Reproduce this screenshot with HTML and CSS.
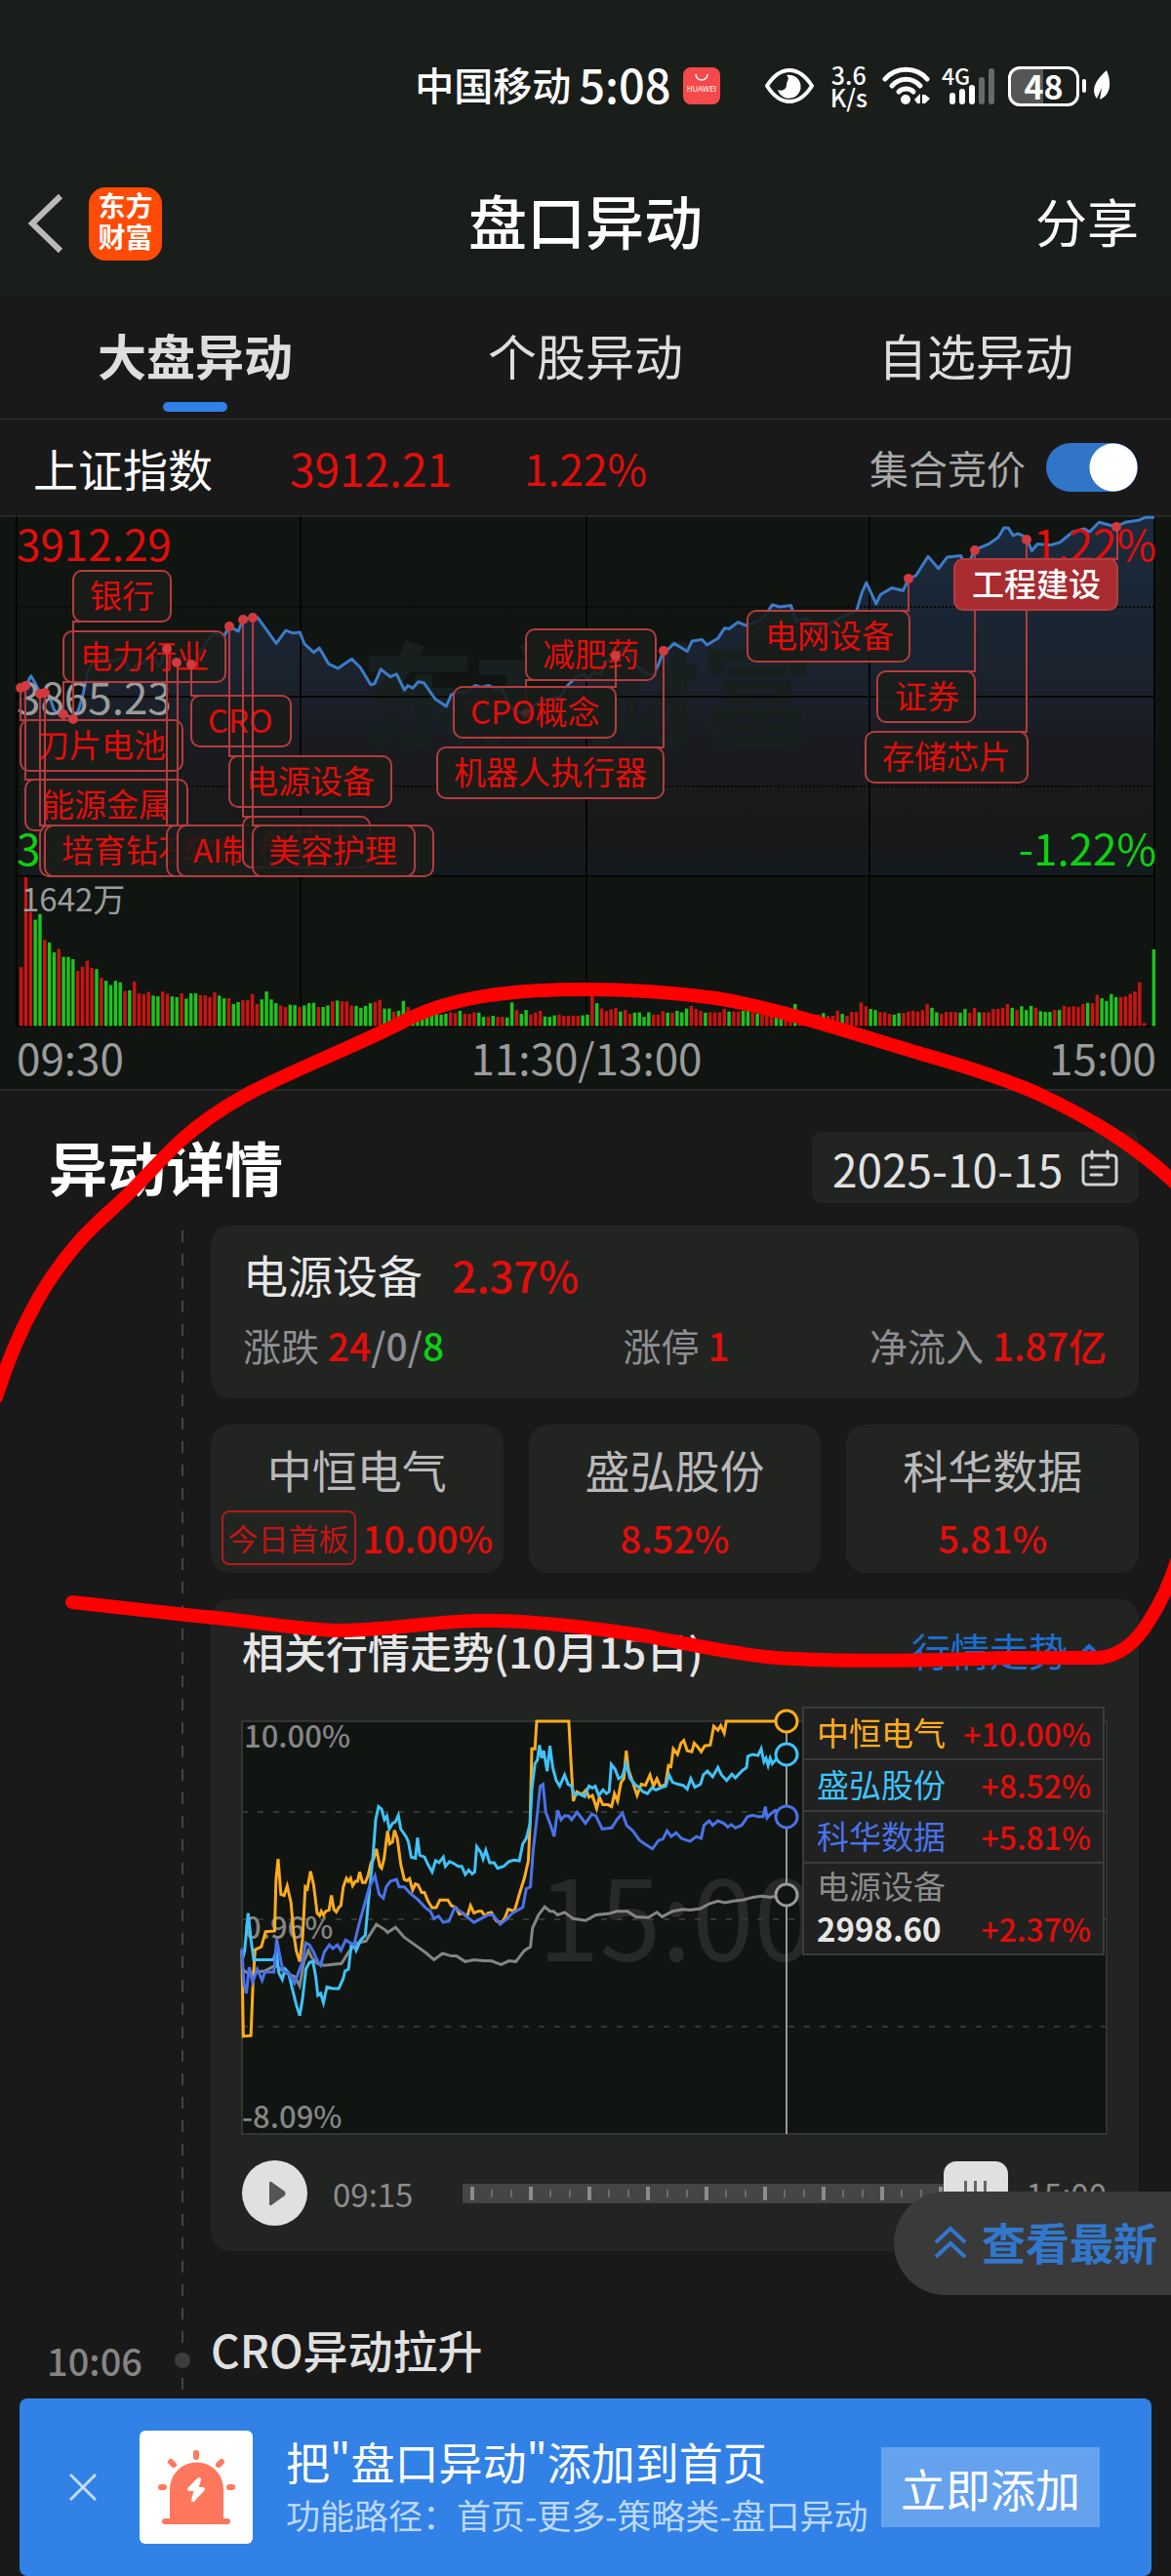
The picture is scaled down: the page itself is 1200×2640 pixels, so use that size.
FILE: index.html
```html
<!DOCTYPE html>
<html lang="zh-CN">
<head>
<meta charset="utf-8">
<meta name="viewport" content="width=device-width">
<title>盘口异动</title>
<link rel="stylesheet" href="styles.css">
</head>
<body>
<div class="page">
<header class="top">
  <div class="status">
    <span class="carrier">中国移动</span>
    <span class="clock">5:08</span>
    <svg class="store" viewBox="0 0 38 38" width="38" height="38"><rect width="38" height="38" rx="8" fill="#f5494c"/><path d="M13 7a6 6 0 0 0 12 0" fill="none" stroke="#fff" stroke-width="1.5"/><text x="19" y="25" font-size="8" text-anchor="middle" fill="#fff">HUAWEI</text></svg>
    <svg class="eye" viewBox="0 0 50 36" width="50" height="36"><path d="M2 18C9 7 17 2 25 2s16 5 23 16c-7 11-15 16-23 16S9 29 2 18z" fill="none" stroke="#fff" stroke-width="4"/><path d="M22 7a12 12 0 1 1-9 15c5 2 9-1 9-5s4-6 0-10z" fill="#fff"/></svg>
    <span class="speed">3.6<br>K/s</span>
    <svg class="wifi" viewBox="0 0 49 40" width="49" height="40"><g fill="none" stroke="#fff" stroke-width="5" stroke-linecap="round"><path d="M3 13C14 0 35 0 46 13"/><path d="M10 20C18 11 31 11 39 20"/><path d="M17 26C21 22 28 22 32 26"/></g><circle cx="24" cy="34" r="5" fill="#fff"/><path d="M33 34l6-6v10h-3zM41 29h3l5 4-5 5h-3z" fill="#fff"/></svg>
    <svg class="signal" viewBox="0 0 56 42" width="56" height="42"><text x="0" y="20" font-size="23" font-weight="500" fill="#fff">4G</text><g stroke-width="6" stroke-linecap="round" stroke="#fff"><path d="M11 31v6M21 27v10M31 23v14"/><path d="M41 15v22M51 6v31" stroke="#686a68"/></g></svg>
    <span class="battery">48</span>
    <svg class="leaf" viewBox="0 0 30 36" width="30" height="36"><path d="M2 13v10" stroke="#fff" stroke-width="4" stroke-linecap="round"/><path d="M25 2c5 12 5 25-7 30l2-12-5 11c-7-10 0-20 10-29z" fill="#fff"/></svg>
  </div>
  <nav class="titlebar">
    <button class="back" aria-label="返回"><svg viewBox="0 0 38 62" width="38" height="62"><path d="M34 3L5 31l29 28" fill="none" stroke="#b9bab9" stroke-width="6"/></svg></button>
    <span class="logo">东方<br>财富</span>
    <h1>盘口异动</h1>
    <button class="share">分享</button>
  </nav>
</header>

<nav class="tabs">
  <a href="#market" class="active">大盘异动</a>
  <a href="#stock">个股异动</a>
  <a href="#watch">自选异动</a>
</nav>

<section class="index-row">
  <span class="index-name">上证指数</span>
  <span class="index-price">3912.21</span>
  <span class="index-change">1.22%</span>
  <label for="auction">集合竞价</label>
  <input type="checkbox" id="auction" class="switch" checked>
</section>

<svg class="market" id="market" viewBox="0 528 1200 590">
  <defs><linearGradient id="fade" x1="0" y1="0" x2="0" y2="1"><stop offset="0" stop-color="#1b2b3e"/><stop offset=".5" stop-color="#1a212b"/><stop offset=".62" stop-color="#1a1b21"/><stop offset=".88" stop-color="#191819"/><stop offset="1" stop-color="#131b1e"/></linearGradient></defs>
  <rect x="0" y="528" width="1200" height="589" fill="#101511"/>
  <path class="edge" d="M0 529H1200M0 1117H1200"/>
  <g transform="translate(0 510) scale(.3827 .389)">
    <path id="index-area" fill="url(#fade)"/>
  </g>
  <text class="brand" x="602" y="757">东方财富</text>
  <path class="grid" d="M17 529V1052M308 529V1052M601 529V1052M891 529V1052M1183 529V1052M17 714H1183M17 898H1183M17 1052H1183"/>
  <path class="grid dots" d="M17 622H1183M17 806H1183"/>
  <g transform="translate(0 510) scale(.3827 .389)">
    <path id="index-line" class="index-line" d="M55 500L68 497 83 470 95 490 108 517 120 513 133 525 145 560 158 570 170 571 183 575 196 584 210 560 222 520 235 460 247 435 260 420 275 425 290 430 310 430 325 420 335 430 350 460 365 440 385 435 400 415 412 420 425 445 437 420 448 398 460 430 474 435 490 415 500 430 512 440 525 430 540 400 560 370 575 357 600 365 613 340 625 345 638 352 651 320 676 316 690 316 715 350 740 384 765 350 785 357 803 355 815 385 840 408 855 396 880 438 905 450 942 425 965 448 993 493 1003 490 1020 452 1045 472 1062 465 1083 507 1092 495 1105 502 1120 485 1135 488 1165 530 1195 550 1208 520 1225 512 1250 512 1272 495 1290 500 1308 495 1330 505 1345 505 1365 550 1385 565 1409 567 1440 540 1470 530 1500 525 1520 495 1545 470 1565 465 1573 480 1588 460 1608 465 1628 430 1649 416 1668 400 1683 405 1703 440 1723 460 1748 470 1763 440 1776 404 1788 400 1805 384 1840 405 1853 378 1880 374 1893 388 1923 370 1940 344 1953 345 1976 328 2001 338 2018 330 2038 320 2053 305 2068 282 2088 288 2118 284 2133 325 2158 318 2178 335 2208 340 2233 325 2258 312 2293 300 2308 250 2320 224 2346 280 2358 255 2388 238 2418 245 2433 214 2453 205 2485 155 2513 187 2536 157 2573 153 2588 185 2610 138 2648 122 2673 105 2688 80 2700 80 2713 100 2726 95 2738 100 2750 110 2763 140 2778 122 2813 125 2838 118 2873 90 2903 82 2918 90 2943 65 2989 77 3013 65 3048 60 3068 52 3091 52"/>
    <g id="volume"></g>
  </g>
  <g class="axis">
    <text x="17" y="575" class="up">3912.29</text>
    <text x="17" y="732">3865.23</text>
    <text x="17" y="887" class="down">3818.17</text>
    <text x="1185" y="575" class="up end">1.22%</text>
    <text x="1185" y="887" class="down end">-1.22%</text>
    <text x="17" y="1102">09:30</text>
    <text x="601" y="1102" class="mid">11:30/13:00</text>
    <text x="1185" y="1102" class="end">15:00</text>
    <text x="22" y="934" class="small">1642万</text>
  </g>
  <g class="tags">
    <path d="M21 705V738h10"/><rect x="21" y="738" width="166" height="52" rx="9"/><text x="38" y="776">刀片电池</text>
    <path d="M26 703V799h10"/><rect x="26" y="799" width="166" height="52" rx="9"/><text x="43" y="837">能源金属</text>
    <path d="M41 711V846h10"/><rect x="41" y="846" width="166" height="52" rx="9"/>
    <path d="M46 710V846h10"/><rect x="46" y="846" width="166" height="52" rx="9"/><text x="63" y="884">培育钻石</text>
    <path d="M65 732V699h10"/><rect x="65" y="647" width="166" height="52" rx="9"/><text x="82" y="685">电力行业</text>
    <path d="M75 737V637h10"/><rect x="75" y="585" width="100" height="52" rx="9"/><text x="92" y="623">银行</text>
    <path d="M171 665V846h10"/><rect x="171" y="846" width="166" height="52" rx="9"/><text x="188" y="884">软件开发</text>
    <path d="M182 679V846h10"/><rect x="182" y="846" width="262" height="52" rx="9"/><text x="198" y="884">AI制药(医疗)</text>
    <path d="M196 681V713h10"/><rect x="196" y="713" width="102" height="52" rx="9"/><text x="213" y="751">CRO</text>
    <path d="M235 642V775h10"/><rect x="235" y="775" width="166" height="52" rx="9"/><text x="252" y="813">电源设备</text>
    <path d="M249 635V837h10"/><rect x="249" y="837" width="130" height="52" rx="9"/><text x="266" y="875">AI芯片</text>
    <path d="M259 633V846h10"/><rect x="259" y="846" width="166" height="52" rx="9"/><text x="275" y="884">美容护理</text>
    <path d="M539 731V697h10"/><rect x="539" y="645" width="133" height="52" rx="9"/><text x="556" y="683">减肥药</text>
    <path d="M631 672V704h-10"/><rect x="465" y="704" width="166" height="52" rx="9"/><text x="482" y="742">CPO概念</text>
    <path d="M680 667V766h-10"/><rect x="448" y="766" width="232" height="52" rx="9"/><text x="465" y="804">机器人执行器</text>
    <path d="M931 593V626h-10"/><rect x="766" y="626" width="166" height="52" rx="9"/><text x="784" y="664">电网设备</text>
    <path d="M999 564V688h-10"/><rect x="899" y="688" width="100" height="52" rx="9"/><text x="917" y="726">证券</text>
    <path d="M1052 553V750h-10"/><rect x="887" y="750" width="166" height="52" rx="9"/><text x="904" y="788">存储芯片</text>
    <path d="M1145 540V573h-10"/><rect x="978" y="573" width="167" height="52" rx="9" class="hot"/><text x="996" y="611" class="hot">工程建设</text>
  </g>
  <g fill="#d23a3d"><circle cx="21" cy="705" r="5"/><circle cx="26" cy="703" r="5"/><circle cx="41" cy="711" r="5"/><circle cx="46" cy="710" r="5"/><circle cx="65" cy="732" r="5"/><circle cx="75" cy="737" r="5"/><circle cx="171" cy="665" r="5"/><circle cx="181" cy="679" r="5"/><circle cx="196" cy="681" r="5"/><circle cx="235" cy="642" r="5"/><circle cx="249" cy="635" r="5"/><circle cx="259" cy="633" r="5"/><circle cx="539" cy="731" r="5" opacity=".2"/><circle cx="631" cy="672" r="5"/><circle cx="680" cy="667" r="5"/><circle cx="931" cy="593" r="5"/><circle cx="999" cy="564" r="5"/><circle cx="1052" cy="553" r="5"/><circle cx="1144" cy="540" r="5"/></g>
</svg>

<section class="details">
  <div class="details-head">
    <h2>异动详情</h2>
    <button class="date">2025-10-15
      <svg viewBox="0 0 38 38" width="38" height="38"><g fill="none" stroke="#d0d0d0" stroke-width="3" stroke-linecap="round"><rect x="2" y="6" width="34" height="30" rx="4"/><path d="M11 2v7M27 2v7M10 18h18M10 26h11"/></g></svg>
    </button>
  </div>

  <ul class="timeline">
    <li class="event">
      <div class="body">
        <article class="card sector">
          <h3>电源设备 <b class="up">2.37%</b></h3>
          <div class="stats">
            <p>涨跌 <b><i class="up">24</i>/0/<i class="down">8</i></b></p>
            <p>涨停 <b class="up">1</b></p>
            <p>净流入 <b class="up">1.87亿</b></p>
          </div>
        </article>
        <div class="stocks">
          <a href="#s1" class="card"><span>中恒电气</span><b><em>今日首板</em>10.00%</b></a>
          <a href="#s2" class="card"><span>盛弘股份</span><b>8.52%</b></a>
          <a href="#s3" class="card"><span>科华数据</span><b>5.81%</b></a>
        </div>
        <article class="card trend">
          <div class="trend-head">
            <h3>相关行情走势(10月15日)</h3>
            <button>行情走势 <svg viewBox="0 0 22 14" width="22" height="14"><path d="M3 11l8-8 8 8" fill="none" stroke="#1b6fd0" stroke-width="4"/></svg></button>
          </div>
          <div class="plot">
            <svg viewBox="248 1764 886 423">
              <rect x="248" y="1764" width="886" height="423" fill="#101511" stroke="#313431" stroke-width="2"/>
              <text x="551" y="2010" class="ghost">15:00</text>
              <path d="M248 1857H1134M248 1967H1134M248 2077H1134" stroke="#343734" stroke-width="2" stroke-dasharray="6 10"/>
              <g class="scale"><text x="250" y="1791">10.00%</text><text x="250" y="1987">0.96%</text><text x="248" y="2181">-8.09%</text></g>
              <g class="series" transform="translate(200 1620) scale(.35714 .3827)">
                <path stroke="#858585" d="M134 1040L150 1050 200 1045 230 1030 260 1050 285 1060 300 1085 312 1020 325 990 335 1010 350 1025 370 1030 420 1025 440 995 465 970 490 965 520 920 545 935 552 942 575 928 600 955 630 975 660 995 685 1015 710 998 735 1005 750 1005 775 1020 800 1015 830 1018 850 1018 878 1028 900 1018 920 1020 945 990 962 980 968 930 985 895 1003 873 1018 885 1028 885 1040 895 1060 888 1085 905 1120 910 1150 895 1185 892 1210 885 1240 885 1265 900 1300 902 1325 888 1340 900 1370 885 1400 880 1420 882 1450 878 1475 865 1500 858 1520 862 1545 858 1570 855 1600 848 1625 845 1650 847 1697 842"/>
                <path stroke="#ffac1c" d="M134 990L138 1220 160 1218 166 1075 172 988 190 980 202 940 228 938 232 800 238 745 246 840 255 843 264 817 275 862 282 940 290 990 300 1020 308 960 316 820 322 825 331 778 340 815 350 890 357 897 362 885 368 895 375 885 384 882 391 843 398 880 405 887 412 875 418 870 425 820 434 797 440 805 446 797 452 817 460 805 466 805 472 780 480 808 488 808 496 790 505 755 512 745 520 718 530 765 535 770 542 745 552 670 558 705 566 700 572 668 580 690 590 760 600 800 608 803 615 798 624 828 632 812 640 815 650 835 658 835 668 858 680 876 692 875 702 855 725 855 735 870 748 875 758 893 768 890 780 900 790 870 800 890 812 885 822 885 832 898 840 890 850 888 865 912 880 915 890 900 898 880 906 882 916 885 930 840 945 795 956 750 961 650 966 450 975 450 980 376 1072 376 1078 480 1085 590 1095 565 1110 572 1122 560 1130 580 1140 575 1152 610 1160 580 1170 600 1185 600 1195 605 1203 570 1212 590 1222 540 1230 530 1237 455 1243 505 1252 530 1268 575 1280 545 1292 548 1305 520 1315 550 1325 530 1335 552 1350 545 1358 495 1365 498 1372 450 1384 465 1394 435 1402 428 1412 455 1425 458 1432 435 1442 445 1452 458 1462 442 1478 440 1488 390 1500 400 1508 388 1518 408 1524 376 1697 376"/>
                <path stroke="#3fc3fa" d="M134 1020L142 990 152 890 160 960 168 1015 225 1015 233 990 240 1050 250 1068 258 1040 268 1050 278 1090 290 1135 300 1165 308 1120 318 1040 328 1022 338 1020 346 1060 352 1110 360 1105 368 1130 378 1088 395 1092 412 1092 425 1065 430 1045 440 1040 448 975 458 980 462 990 475 962 488 950 498 850 510 740 518 640 526 605 535 612 543 640 550 630 557 665 566 650 575 645 583 628 590 665 605 685 612 700 620 740 632 743 638 688 644 735 658 740 668 760 680 780 690 750 700 755 712 740 718 765 730 752 742 757 755 765 765 765 775 787 785 775 795 785 802 780 808 712 820 728 826 745 834 722 845 755 858 755 868 770 885 765 900 752 915 748 930 750 940 705 950 690 961 650 966 560 975 490 982 480 988 440 994 475 1000 455 1010 510 1018 442 1026 500 1036 535 1046 550 1060 520 1070 545 1080 550 1088 575 1100 570 1118 578 1130 550 1140 555 1148 550 1158 575 1170 560 1180 570 1188 565 1194 492 1205 505 1215 530 1225 525 1237 490 1248 530 1262 545 1275 555 1285 565 1298 570 1310 555 1322 560 1335 555 1350 550 1360 520 1370 540 1385 545 1400 548 1412 558 1422 530 1434 553 1450 545 1458 520 1470 510 1485 525 1500 500 1510 520 1525 535 1540 518 1550 528 1568 510 1582 500 1586 470 1600 465 1615 468 1624 450 1632 485 1638 475 1644 495 1650 475 1656 490 1665 480 1675 475 1697 466"/>
                <path stroke="#4a72ea" d="M134 985L140 1080 147 1105 155 1035 165 1075 178 1040 192 1070 200 1048 226 1048 234 960 242 1000 252 1045 268 1050 285 1078 300 1040 308 1020 317 970 328 975 340 995 352 1020 360 1030 370 995 385 975 395 985 408 975 418 990 432 962 445 970 456 975 470 920 485 870 500 820 516 790 528 840 540 850 548 820 560 805 578 800 585 820 600 820 615 835 640 855 660 875 675 885 685 905 698 898 712 915 728 912 745 875 760 885 780 900 800 915 820 905 840 895 855 895 875 920 895 905 910 890 940 875 950 825 962 820 970 720 980 640 990 550 998 545 1006 620 1020 655 1030 685 1040 615 1050 640 1060 630 1072 630 1080 640 1096 620 1108 635 1120 650 1138 625 1150 630 1168 665 1195 662 1210 640 1226 622 1238 655 1256 670 1275 695 1290 705 1312 718 1330 695 1342 692 1354 670 1366 685 1380 675 1395 690 1420 698 1438 685 1452 690 1460 655 1475 643 1485 655 1500 643 1518 650 1528 660 1538 653 1550 662 1568 655 1585 632 1600 628 1615 632 1630 632 1636 605 1641 635 1650 625 1665 615 1697 632"/>
              </g>
              <path d="M806 1764V2187" stroke="#9a9a9a" stroke-width="2"/>
              <g fill="#101511" stroke-width="3"><circle cx="806" cy="1764" r="11" stroke="#ffac1c"/><circle cx="806" cy="1798" r="11" stroke="#3fc3fa"/><circle cx="806" cy="1862" r="11" stroke="#4a72ea"/><circle cx="806" cy="1942" r="11" stroke="#9a9a9a"/></g>
            </svg>
            <table class="legend">
              <tr class="c1"><th scope="row">中恒电气</th><td>+10.00%</td></tr>
              <tr class="c2"><th scope="row">盛弘股份</th><td>+8.52%</td></tr>
              <tr class="c3"><th scope="row">科华数据</th><td>+5.81%</td></tr>
              <tr class="c4"><th scope="row">电源设备<br><b>2998.60</b></th><td>+2.37%</td></tr>
            </table>
          </div>
          <div class="player">
            <button class="play" aria-label="播放"><svg viewBox="0 0 18 26" width="18" height="26"><path d="M1 2q0-2 2-1l14 10q1 2 0 4L3 25q-2 1-2-1z" fill="#555"/></svg></button>
            <label for="seek">09:15</label>
            <input type="range" id="seek" min="0" max="100" value="100">
            <span>15:00</span>
          </div>
        </article>
      </div>
    </li>
    <li class="event next">
      <time>10:06</time>
      <h3>CRO异动拉升</h3>
    </li>
  </ul>
</section>

<svg class="scribble" viewBox="0 0 1200 2640"><path d="M-4 1432C6 1400 20 1365 38 1333 49 1313 62 1295 77 1277 96 1254 118 1238 138 1217 153 1202 167 1186 184 1170 206 1150 230 1134 256 1120 310 1092 370 1070 421 1043 470 1020 530 1014 600 1014 650 1014 690 1017 734 1023 800 1034 870 1058 944 1080 990 1093 1030 1106 1062 1120 1120 1147 1165 1175 1206 1214M1206 1600C1199 1622 1190 1642 1177 1662 1165 1682 1150 1696 1127 1699H1033C950 1702 850 1704 785 1698 740 1693 700 1684 664 1677 600 1667 540 1660 486 1661 430 1663 400 1671 343 1671 290 1668 250 1660 200 1656L74 1642"/></svg>

<button class="latest"><svg viewBox="0 0 36 36" width="36" height="36"><path d="M3 18L18 4l15 14M3 33l15-14 15 14" fill="none" stroke="#3178cc" stroke-width="4"/></svg>查看最新</button>

<aside class="promo">
  <button class="close" aria-label="关闭"><svg viewBox="0 0 28 28" width="28" height="28"><path d="M1 1l26 26M27 1L1 27" stroke="#c3dcfa" stroke-width="3"/></svg></button>
  <svg class="alarm" viewBox="0 0 116 116" width="116" height="116"><rect width="116" height="116" rx="6" fill="#fff"/><path d="M31 90V60a27 27 0 0 1 55 0v30h4a3 3 0 0 1 0 6H26a3 3 0 0 1 0-6z" fill="#ff785d"/><path d="M58 23v4M32 32l3 3M84 32l-3 3M22 58h3M92 58h3" stroke="#ff785d" stroke-width="6" stroke-linecap="round"/><path d="M61 50L51 60h14L55 71z" fill="#fff" stroke="#fff" stroke-width="4" stroke-linecap="round" stroke-linejoin="round"/></svg>
  <div class="promo-text"><strong>把"盘口异动"添加到首页</strong><span>功能路径：首页-更多-策略类-盘口异动</span></div>
  <button class="add">立即添加</button>
</aside>
</div>
<script src="charts.js"></script>
</body>
</html>
```
FILE: styles.css
```css
* { box-sizing: border-box; margin: 0; padding: 0; }
body { background: #191919; color: #fff; font-family: "Noto Sans CJK SC", "Noto Sans", sans-serif; }
button { background: none; border: 0; color: inherit; font: inherit; }
a { color: inherit; text-decoration: none; }
i, em { font-style: normal; }
svg { display: block; flex: none; }
.page { position: relative; min-height: 100vh; padding-bottom: 182px; overflow: hidden; }
.up { color: #e30d0a; fill: #e30d0a; }
.down { color: #0cd212; fill: #0cd212; }

.top { background: #1a1e1b; }
.status { display: flex; align-items: center; justify-content: flex-end; height: 156px; padding: 20px 61px 0 0; white-space: nowrap; }
.carrier, .clock { padding-bottom: 4px; font-weight: 500; line-height: 48px; }
.carrier { font-size: 40px; }
.clock { margin-left: 8px; font-size: 47px; }
.store { margin-left: 12px; }
.eye { margin-left: 46px; }
.speed { margin-left: 17px; font-size: 25px; font-weight: 500; line-height: 23px; text-align: center; }
.wifi { margin-left: 15px; }
.signal { margin-left: 12px; }
.battery { width: 73px; height: 41px; margin-left: 12px; border: 3px solid #fff; border-radius: 12px; background: linear-gradient(90deg, #555756 50%, transparent 50%); font-size: 34px; font-weight: 700; line-height: 33px; text-align: center; }
.leaf { margin-left: 3px; }

.titlebar { position: relative; display: flex; align-items: center; height: 146px; padding: 0 33px 0 28px; }
.back { display: block; }
.logo { width: 75px; height: 75px; margin-left: 25px; padding-top: 2px; border-radius: 17px; background: #ff4b05; font-size: 28px; font-weight: 700; line-height: 32px; text-align: center; }
.titlebar h1 { position: absolute; left: 0; right: 0; padding-bottom: 8px; font-size: 60px; font-weight: 500; line-height: 72px; text-align: center; pointer-events: none; }
.share { margin-left: auto; padding-bottom: 6px; font-size: 53px; line-height: 60px; }

.tabs { display: grid; grid-template-columns: repeat(3, 1fr); height: 128px; border-bottom: 1px solid #2b2d2b; }
.tabs a { position: relative; height: 127px; color: #dedede; font-size: 50px; line-height: 123px; text-align: center; }
.tabs .active { font-weight: 700; }
.tabs .active::after { content: ""; position: absolute; left: 50%; bottom: 7px; width: 66px; height: 10px; margin-left: -33px; border-radius: 5px; background: #3080e6; }

.index-row { display: flex; align-items: center; height: 98px; padding: 0 34px; line-height: 60px; }
.index-name { font-size: 46px; }
.index-price, .index-change { color: #e30d0a; font-size: 46px; }
.index-price { margin-left: 79px; }
.index-change { margin-left: 74px; font-size: 44px; }
.index-row label { margin-left: auto; color: #aaa; font-size: 40px; }
.switch { appearance: none; width: 94px; height: 50px; margin-left: 21px; border-radius: 25px; background: radial-gradient(circle at 69px 25px, #fff 24px, transparent 25px), #3075c8; }

.market { width: 100%; overflow: visible; }
.edge { stroke: #292b29; stroke-width: 2; }
.grid { fill: none; stroke: #050705; stroke-width: 2; }
.dots { stroke-dasharray: 2 2; }
.brand { font-size: 116px; font-weight: 900; text-anchor: middle; fill: #18201f; }
.index-line { fill: none; stroke: #3c7cc8; stroke-width: 3; stroke-linejoin: round; vector-effect: non-scaling-stroke; }
.axis { font-size: 44px; fill: #9c9c9c; }
.axis .small { font-size: 33px; }
.end { text-anchor: end; }
.mid { text-anchor: middle; }
.tags path, .tags rect { fill: none; stroke: #b53c3e; stroke-width: 2; }
.tags rect { fill: rgba(25, 28, 25, .88); }
.tags text { font-size: 33px; fill: #e30d0a; }
.tags rect.hot { fill: #a92c30; }
.tags text.hot { fill: #fff; font-weight: 500; }

.details-head { display: flex; align-items: center; justify-content: space-between; padding: 42px 33px 23px 50px; }
.details-head h2 { padding-bottom: 4px; font-size: 60px; font-weight: 700; line-height: 68px; }
.date { display: flex; align-items: center; justify-content: space-between; width: 335px; height: 73px; padding: 0 21px; border-radius: 10px; background: #212421; color: #e2e2e2; font-size: 46px; line-height: 60px; }

.timeline { list-style: none; background: repeating-linear-gradient(#444 0 12px, transparent 12px 24px) 186px 5px / 2px 100% no-repeat; }
.event { padding: 0 33px 0 216px; }
.card { background: #222422; border-radius: 20px; }
.body { display: flex; flex-direction: column; gap: 27px; }
.sector { height: 177px; padding: 19px 33px 0; }
.sector h3 { color: #e6e6e6; font-size: 46px; font-weight: 400; line-height: 60px; }
.sector h3 b { margin-left: 20px; font-size: 44px; font-weight: 500; }
.stats { display: grid; grid-template-columns: 44% 1fr auto; margin-top: 14px; color: #8e8e93; font-size: 39px; line-height: 56px; }
.stats b { font-weight: 500; }
.stocks { display: grid; grid-template-columns: repeat(3, 1fr); gap: 26px; }
.stocks a { display: flex; flex-direction: column; align-items: center; height: 152px; padding-top: 15px; color: #b9b9b9; font-size: 46px; line-height: 60px; }
.stocks b { display: flex; align-items: center; gap: 7px; margin-top: 11px; color: #e30d0a; font-size: 38px; font-weight: 500; white-space: nowrap; }
.stocks em { padding: 0 5px; border: 2px solid #b01c1b; border-radius: 8px; color: #c01615; font-size: 31px; font-weight: 400; line-height: 52px; }
.trend { padding: 22px 33px 26px 32px; }
.trend-head { display: flex; align-items: center; justify-content: space-between; height: 60px; margin-bottom: 43px; line-height: 60px; }
.trend-head h3 { color: #e6e6e6; font-size: 43px; font-weight: 500; }
.trend-head button { display: flex; align-items: center; gap: 11px; padding-right: 7px; color: #1b6fd0; font-size: 40px; }
.plot { position: relative; }
.plot svg { width: 100%; overflow: visible; }
.ghost { font-size: 114px; fill: #282a28; }
.scale { font-size: 31px; font-weight: 500; fill: #858585; }
.series path { fill: none; stroke-width: 3; vector-effect: non-scaling-stroke; }
.legend { position: absolute; top: -15px; right: 2px; width: 310px; border: 2px solid #3a3c3b; border-collapse: collapse; background: #202120; font-size: 33px; line-height: 44px; }
.legend tr { height: 53px; border-bottom: 2px solid #3a3c3b; }
.legend th { padding: 0 0 4px 13px; font-weight: 400; text-align: left; }
.legend td { padding: 0 12px 4px 0; color: #e30d0a; font-size: 32px; font-weight: 500; text-align: right; vertical-align: bottom; }
.legend b { color: #e6e6e6; font-weight: 700; }
.c1 { color: #ffac1c; }
.c2 { color: #3fc3fa; }
.c3 { color: #4a72ea; }
.c4 { color: #8c8c8c; }
.player { display: flex; align-items: center; margin-top: 27px; color: #8c8c8c; font-size: 33px; line-height: 40px; }
.play { display: flex; align-items: center; justify-content: center; width: 67px; height: 67px; margin-right: 26px; padding-left: 4px; border-radius: 50%; background: #e0e0e0; }
#seek { appearance: none; flex: 1; min-width: 0; height: 67px; margin: 0 19px 0 51px; background: repeating-linear-gradient(90deg, #8a8c8a 0 4px, transparent 4px 60px) 8px 27px / 100% 14px no-repeat, repeating-linear-gradient(90deg, #6a6c6a 0 2px, transparent 2px 20px) 9px 30px / 100% 8px no-repeat, linear-gradient(#444644, #444644) 0 24px / 100% 20px no-repeat; }
#seek::-webkit-slider-thumb { appearance: none; width: 66px; height: 66px; border-radius: 13px; background: repeating-linear-gradient(90deg, #666 0 3px, transparent 3px 10px) 21px 20px / 24px 26px no-repeat, #e0e0e0; }
.next { position: relative; display: flex; align-items: center; padding-top: 63px; height: 151px; }
.next time { position: absolute; left: 48px; top: 87px; color: #858585; font-size: 38px; font-weight: 500; line-height: 50px; }
.next h3 { padding-bottom: 14px; color: #e0e0e0; font-size: 46px; font-weight: 500; line-height: 60px; }
.next::before { content: ""; position: absolute; left: 179px; top: 104px; width: 16px; height: 16px; border-radius: 50%; background: #3c3c3c; }

.scribble { position: absolute; left: 0; top: 0; width: 100%; pointer-events: none; }
.scribble path { fill: none; stroke: #f00; stroke-width: 14; stroke-linecap: round; }
.latest { position: fixed; right: 0; bottom: 288px; display: flex; align-items: center; gap: 14px; height: 106px; padding: 0 14px 2px 40px; border-radius: 53px 0 0 53px; background: #3a3a3a; color: #3178cc; font-size: 45px; font-weight: 700; line-height: 60px; }
.promo { position: fixed; left: 20px; right: 20px; bottom: 0; display: flex; align-items: center; height: 182px; border-radius: 8px; background: #3181e6; white-space: nowrap; }
.close { margin-left: 51px; }
.alarm { margin-left: 44px; }
.promo-text { flex: 1; margin-left: 34px; }
.promo-text strong, .promo-text span { display: block; font-weight: 400; }
.promo-text strong { font-size: 45px; line-height: 56px; }
.promo-text span { color: #bcd8fa; font-size: 35px; line-height: 52px; }
.add { width: 224px; height: 82px; margin-right: 53px; background: #65a2ee; font-size: 46px; line-height: 78px; text-align: center; }
```
FILE: charts.js
```js
// One-minute volume bars: height followed by direction (r rises, g falls).
const volume = `155r 392r 300r 280g 295g 227r 220g 194g 203r 182g 182g 176g 145r 156r 172r 153r 150g 127r 119g 108g
119g 115g 92r 94g 117r 86r 84r 90r 80g 78g 91r 85r 78g 76g 86r 72g 86g 86g 81r 81r 76r 89r 80g 73g 73r 58g 63g 68r 68r 84r
58r 70g 91g 70g 60g 54r 50r 56g 55g 50r 54g 60g 61g 50r 50g 54g 65r 67g 65r 65r 54r 53g 48g 53g 60g 63r 69r 46g 46g 38r
40g 66g 50r 40g 35g 36g 32g 38g 34g 30g 32g 36r 34r 40g 32r 32r 36r 35g 24g 24r 27g 24r 24r 22g 62g 42r 32g 42g 30r 35r
40r 25g 24g 28g 30r 27r 27r 27r 27r 28g
30g 80r 60g 46r 40r 44r 48r 38g 42r 32r 35g 36g 24g 36g 30r 30r 39r 35g 35r 40g 36g 46g 53r 45r 40r 35g 36r 36r 36r 45r
38g 38r 38r 40g 40g 35r 32g 30r 30r 30r 30g 30g 30r 30r 58g 30r 30r 30r 30r 30r 34g 27r 27r 40r 32g 27r 37r 37r 62r 52r
45g 42g 37r 36r 32r 30g 34g 34r 38r 40r 38r 42r 58r 48g 36g 32r 37r 37r 37r 35g 45g 35r 48r 36g 36r 36r 45r 45r 48r 58r
48g 42r 52g 42g 53g 48r 39g 37g 37g 42r 42g 53r 50r 52r 50r 58r 61g 60r 82r 73g 66g 84g 76g 76r 78r 85r 91r 115r 8r 0r 202g`.split(/\s+/);

const group = document.getElementById('volume');
const step = (3089 - 56) / (volume.length - 1);
volume.forEach((item, i) => {
  const height = parseInt(item, 10);
  const bar = document.createElementNS('http://www.w3.org/2000/svg', 'rect');
  bar.setAttribute('x', 52 + i * step);
  bar.setAttribute('y', 1392 - height);
  bar.setAttribute('width', 9);
  bar.setAttribute('height', height);
  bar.setAttribute('fill', item.endsWith('r') ? '#c81412' : '#1dc41c');
  group.appendChild(bar);
});

const line = document.getElementById('index-line').getAttribute('d');
document.getElementById('index-area').setAttribute('d', line + ' V997 H55 Z');
```
